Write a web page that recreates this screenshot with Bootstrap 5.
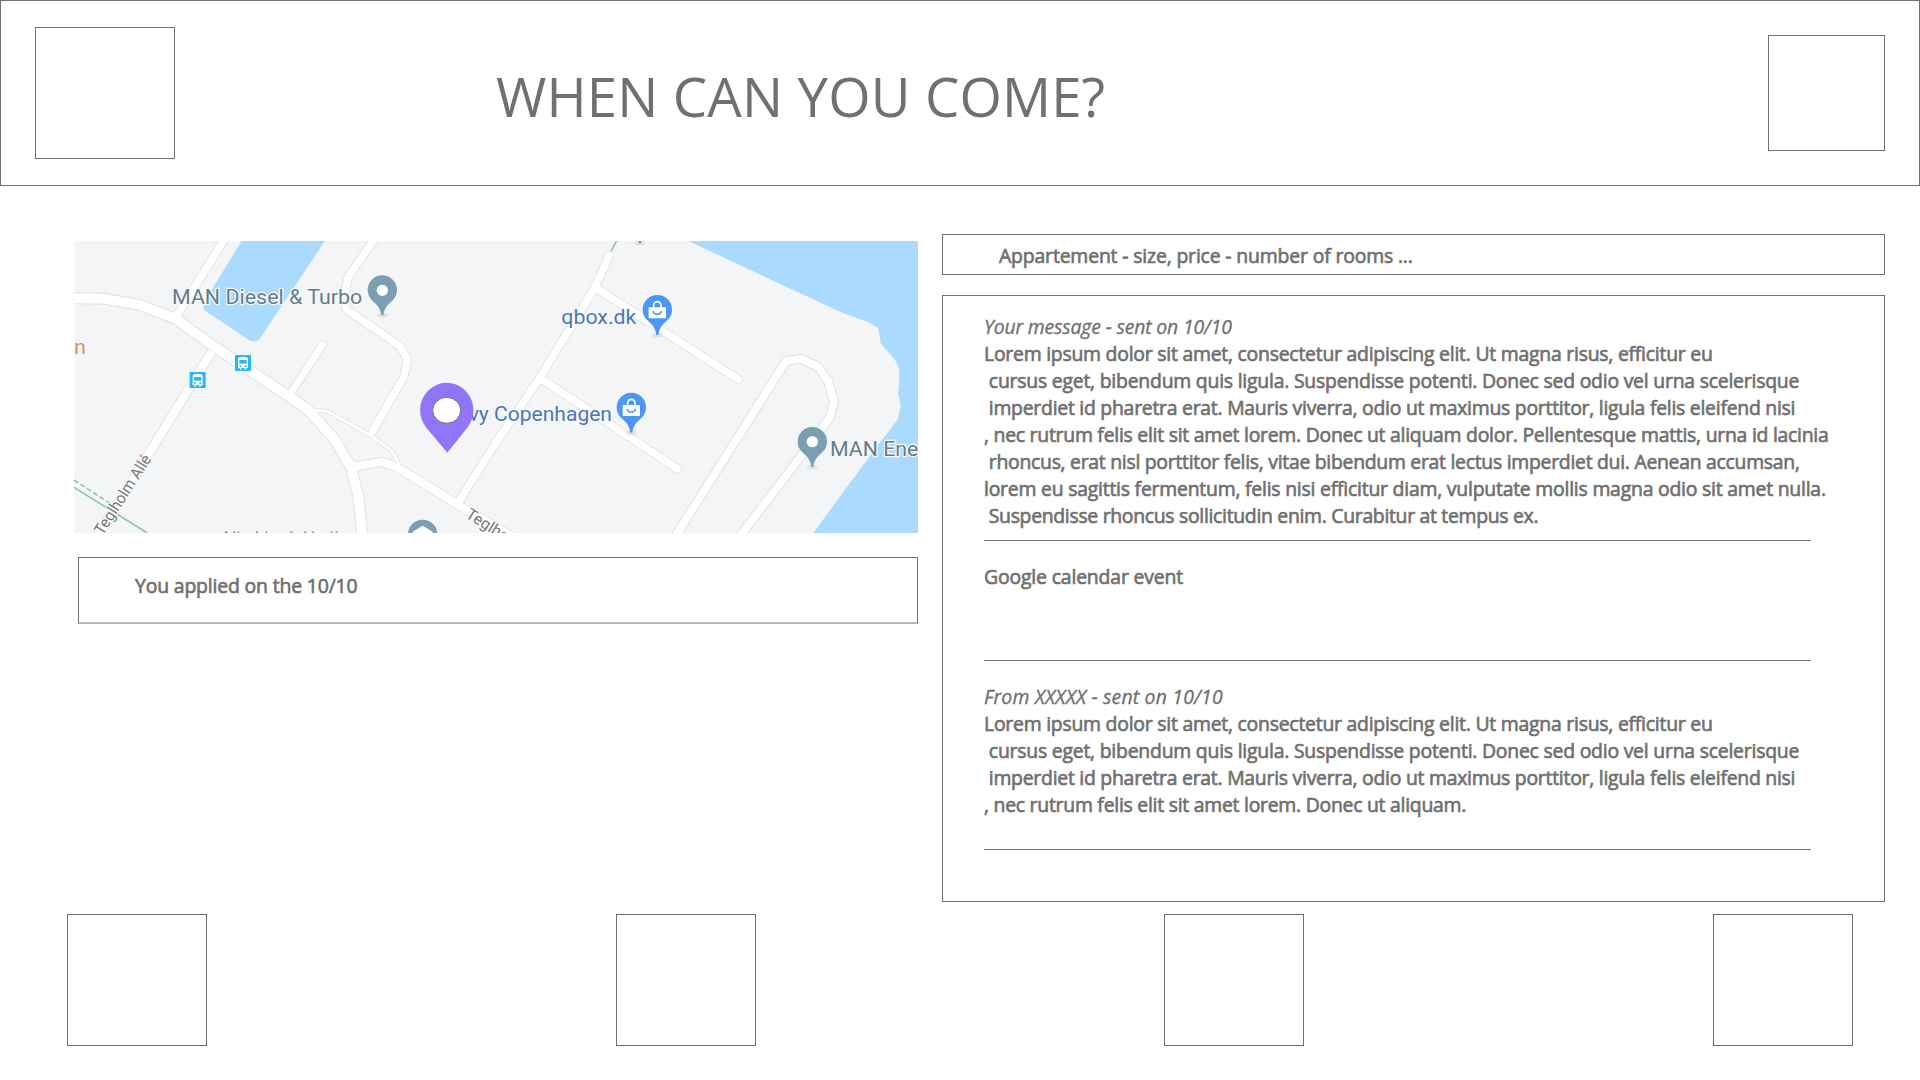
<!DOCTYPE html>
<html lang="en">
<head>
<meta charset="utf-8">
<meta name="viewport" content="width=device-width, initial-scale=1">
<title>When can you come?</title>
<link href="https://cdn.jsdelivr.net/npm/bootstrap@5.3.0/dist/css/bootstrap.min.css" rel="stylesheet">
<script src="https://cdn.jsdelivr.net/npm/bootstrap@5.3.0/dist/js/bootstrap.bundle.min.js"></script>
<style>
  :root { --ink: #707070; }
  body { font-family: "Open Sans", "Noto Sans", sans-serif; color: var(--ink); background: #fff; font-size: 19.4px; line-height: 26.95px; }
  .screen { width: 1920px; height: 1080px; }
  .outlined { border: 1px solid var(--ink); background: #fff; }
  .topbar { height: 186px; padding: 0 34px; }
  .tile { width: 140px; height: 132px; }
  .topbar .tile { margin-top: 26px; }
  .tile-sm { width: 117px; height: 116px; margin-top: 34px; }
  .page-title { font-size: 54.5px; line-height: 76px; margin: 57px 0 0 321px; font-weight: 400; letter-spacing: .17px; }
  .left-col { width: 844px; margin: 55px 0 0 74px; }
  .map-view { width: 844px; height: 292px; display: block; }
  .applied { width: 840px; height: 67px; margin-top: 24px; padding: 15px 0 0 56px; border-bottom: 2px solid #b7b7b7; }
  .right-col { width: 943px; margin: 48px 35px 0 0; }
  .summary { height: 41px; padding: 8px 0 0 56px; }
  .thread { height: 607px; margin-top: 20px; padding: 18px 0 0 41px; }
  .heavy { -webkit-text-stroke: .65px var(--ink); letter-spacing: -.16px; }
  .meta { font-style: italic; letter-spacing: -.15px; -webkit-text-stroke: .3px var(--ink); }
  .meta-wide { letter-spacing: .19px; }
  .msg div { white-space: pre; }
  .t23 { letter-spacing: -.222px; } .t25 { letter-spacing: -.237px; } .t27 { letter-spacing: -.256px; }
  .t29 { letter-spacing: -.28px; } .t33 { letter-spacing: -.305px; }
  .rule { width: 827px; height: 1px; background: var(--ink); }
  .first { height: 226px; }
  .event { height: 119px; padding-top: 23px; }
  .reply { height: 188px; padding-top: 23px; }
  .bottom-bar { padding: 0 67px; margin-top: 12px; }
  .map-label { font-family: Roboto, sans-serif; font-size: 62px; stroke: #f8fafb; stroke-width: 7px; paint-order: stroke; stroke-linejoin: round; }
  .street { font-family: Roboto, sans-serif; font-size: 48px; fill: #75787c; stroke: #fff; stroke-width: 5px; paint-order: stroke; }
</style>
</head>
<body>
<div class="screen d-flex flex-column overflow-hidden">
  <header class="topbar outlined d-flex align-items-start flex-shrink-0">
    <div class="tile outlined"></div>
    <h1 class="page-title text-nowrap">WHEN CAN YOU COME?</h1>
    <div class="tile-sm outlined ms-auto"></div>
  </header>

  <main class="d-flex justify-content-between align-items-start">
    <section class="left-col">
      <svg class="map-view" viewBox="42 33 2532 876" preserveAspectRatio="none">
        <defs>
          <g id="roads" fill="none" stroke-linejoin="round">
            <path stroke-width="22" d="M350 258L495 25"/>
            <path stroke-width="25" d="M455 365L110 925"/>
            <path stroke-width="21" stroke-linecap="round" d="M692 490L787 345"/>
            <path stroke-width="22" stroke-linecap="round" d="M945 25L865 140L853 195L858 238L1020 348L1042 388L1032 440L938 603"/>
            <path stroke-width="8" d="M755 541L800 543L930 615L995 662L1018 703"/>
            <path stroke-width="24" d="M870 712L968 695L1020 717L1200 828L1360 922"/>
            <path stroke-width="22" stroke-linecap="round" d="M1195 817L1300 650L1438 445L1605 172L1648 76"/>
            <path stroke-width="22" stroke-linecap="round" d="M1605 172L2035 448M1438 443L1852 716"/>
            <path stroke-width="23" d="M1842 925L2178 393L2222 386L2275 410L2305 455L2322 515L2310 562L2257 634L2035 925"/>
            <path stroke-width="29" d="M30 205L130 206L240 225L350 268L460 348L700 508L745 540L825 630L873 712L895 800L908 925"/>
          </g>
          <g id="place"><ellipse cx="0" cy="76" rx="16" ry="7" fill="#dfe1e3"/><path d="M-3 76C-6 54-15 45-33 29A44 44 0 1 1 33 29C15 45 6 54 3 76Z"/></g>
          <g id="bag"><rect x="-26" y="-7" width="52" height="33" rx="2" fill="#fff"/><path d="M-11-5V-13A11 11 0 0 1 11-13V-5" fill="none" stroke="#fff" stroke-width="5"/><path d="M-12 4A12 10 0 0 0 12 4" fill="none" stroke="#4d97f2" stroke-width="5"/></g>
          <g id="bus"><rect x="-27" y="-27" width="54" height="54" rx="4" fill="#e9fbff"/><rect x="-24" y="-24" width="48" height="48" fill="#29b6f6"/><path d="M-15 16V-12Q-14-19 0-19Q14-19 15-12V16H9V20H5V15H-5V20H-9V16Z" fill="#fff"/><path d="M-11-9H11V2H-11Z" fill="#29b6f6"/><circle cx="-8" cy="9" r="3" fill="#29b6f6"/><circle cx="8" cy="9" r="3" fill="#29b6f6"/></g>
        </defs>
        <rect x="42" y="33" width="2532" height="876" fill="#f3f5f7"/>
        <path fill="#abdaff" d="M545 33H795L600 325Q590 340 570 332L432 240L430 220ZM1885 33L2050 110L2350 250L2425 276L2455 295L2462 340L2505 390L2517 415L2518 450L2514 490L2522 525L2514 568L2450 650L2260 909H2574V33Z"/>
        <g stroke="#8ccb97" fill="none"><path stroke-width="5" stroke-dasharray="15 8" d="M42 750L150 820"/><path stroke-width="5" d="M42 772L262 909M1671 30L1650 70"/></g>
        <g fill="none" stroke="#e3e4e5" stroke-linejoin="round">
          <path stroke-width="28" d="M350 258L495 25"/><path stroke-width="31" d="M455 365L110 925"/>
          <path stroke-width="28" stroke-linecap="round" d="M692 490L787 345M945 25L865 140L853 195L858 238L1020 348L1042 388L1032 440L938 603M1195 817L1300 650L1438 445L1605 172L1648 76M1605 172L2035 448M1438 443L1852 716"/>
          <path stroke-width="13" d="M755 541L800 543L930 615L995 662L1018 703"/>
          <path stroke-width="30" d="M870 712L968 695L1020 717L1200 828L1360 922M1842 925L2178 393L2222 386L2275 410L2305 455L2322 515L2310 562L2257 634L2035 925"/>
          <path stroke-width="36" d="M30 205L130 206L240 225L350 268L460 348L700 508L745 540L825 630L873 712L895 800L908 925"/>
        </g>
        <use href="#roads" stroke="#fff"/>
        <path stroke="#8ccb97" stroke-width="4" d="M135 828L180 857"/>

        <text class="street" transform="translate(128 918) rotate(-57.5)" textLength="274" lengthAdjust="spacingAndGlyphs">Teglholm Allé</text>
        <text class="street" transform="translate(1214 861) rotate(32)" textLength="196" lengthAdjust="spacingAndGlyphs">Teglholm</text>
        <path stroke="#85898d" stroke-width="5" d="M495 907H503M520 907H526M533 907H538M588 907H594M617 907H622M691 907H697M733 907H739M757 907H762M812 907H817M827 907H832"/>

        <text class="map-label" x="336" y="222" fill="#647d89" textLength="571" lengthAdjust="spacingAndGlyphs">MAN Diesel &amp; Turbo</text>
        <text class="map-label" x="42" y="373" fill="#d78b66" textLength="36" lengthAdjust="spacingAndGlyphs">n</text>
        <text class="map-label" x="1504" y="281" fill="#4a76b8" textLength="225" lengthAdjust="spacingAndGlyphs">qbox.dk</text>
        <text class="map-label" x="1226" y="574" fill="#4a76b8" textLength="430" lengthAdjust="spacingAndGlyphs">vy Copenhagen</text>
        <text class="map-label" x="2310" y="678" fill="#647d89" textLength="265" lengthAdjust="spacingAndGlyphs">MAN Ene</text>

        <use href="#bus" x="413" y="450"/><use href="#bus" x="549" y="399"/>
        <g fill="#7b9eb0"><use href="#place" x="967" y="180"/><use href="#place" x="2257" y="635"/><use href="#place" x="1088" y="913"/><use href="#place" x="1740" y="-36"/></g>
        <g fill="#4d97f2"><use href="#place" x="1792" y="239"/><use href="#place" x="1714" y="532"/></g>
        <circle cx="967" cy="181" r="17" fill="#fff"/><circle cx="2257" cy="635" r="17" fill="#fff"/>
        <path d="M1058 905L1088 887L1118 905V915H1058Z" fill="#fff"/>
        <use href="#bag" x="1792" y="239"/><use href="#bag" x="1714" y="532"/>
        <path fill="#9175f8" d="M1162 668L1099 593A80 82 0 1 1 1224 590Z"/>
        <ellipse cx="1160" cy="541" rx="42" ry="39" fill="#fff" stroke="#707070" stroke-width="3"/>
      </svg>
      <div class="applied outlined heavy ms-1">You applied on the 10/10</div>
    </section>

    <section class="right-col">
      <div class="summary outlined heavy">Appartement - size, price - number of rooms ...</div>
      <div class="thread outlined">
        <div class="first">
          <div class="meta">Your message - sent on 10/10</div>
          <div class="msg heavy"><div class="t25">Lorem ipsum dolor sit amet, consectetur adipiscing elit. Ut magna risus, efficitur eu</div><div class="t23"> cursus eget, bibendum quis ligula. Suspendisse potenti. Donec sed odio vel urna scelerisque</div><div class="t27"> imperdiet id pharetra erat. Mauris viverra, odio ut maximus porttitor, ligula felis eleifend nisi</div><div class="t27">, nec rutrum felis elit sit amet lorem. Donec ut aliquam dolor. Pellentesque mattis, urna id lacinia</div><div class="t29"> rhoncus, erat nisl porttitor felis, vitae bibendum erat lectus imperdiet dui. Aenean accumsan,</div><div class="t23">lorem eu sagittis fermentum, felis nisi efficitur diam, vulputate mollis magna odio sit amet nulla.</div><div class="t33"> Suspendisse rhoncus sollicitudin enim. Curabitur at tempus ex.</div></div>
        </div>
        <div class="rule"></div>
        <div class="event heavy">Google calendar event</div>
        <div class="rule"></div>
        <div class="reply">
          <div class="meta meta-wide">From XXXXX - sent on 10/10</div>
          <div class="msg heavy"><div class="t25">Lorem ipsum dolor sit amet, consectetur adipiscing elit. Ut magna risus, efficitur eu</div><div class="t23"> cursus eget, bibendum quis ligula. Suspendisse potenti. Donec sed odio vel urna scelerisque</div><div class="t27"> imperdiet id pharetra erat. Mauris viverra, odio ut maximus porttitor, ligula felis eleifend nisi</div><div class="t27">, nec rutrum felis elit sit amet lorem. Donec ut aliquam.</div></div>
        </div>
        <div class="rule"></div>
      </div>
    </section>
  </main>

  <footer class="bottom-bar d-flex justify-content-between">
    <div class="tile outlined"></div>
    <div class="tile outlined"></div>
    <div class="tile outlined"></div>
    <div class="tile outlined"></div>
  </footer>
</div>
</body>
</html>
